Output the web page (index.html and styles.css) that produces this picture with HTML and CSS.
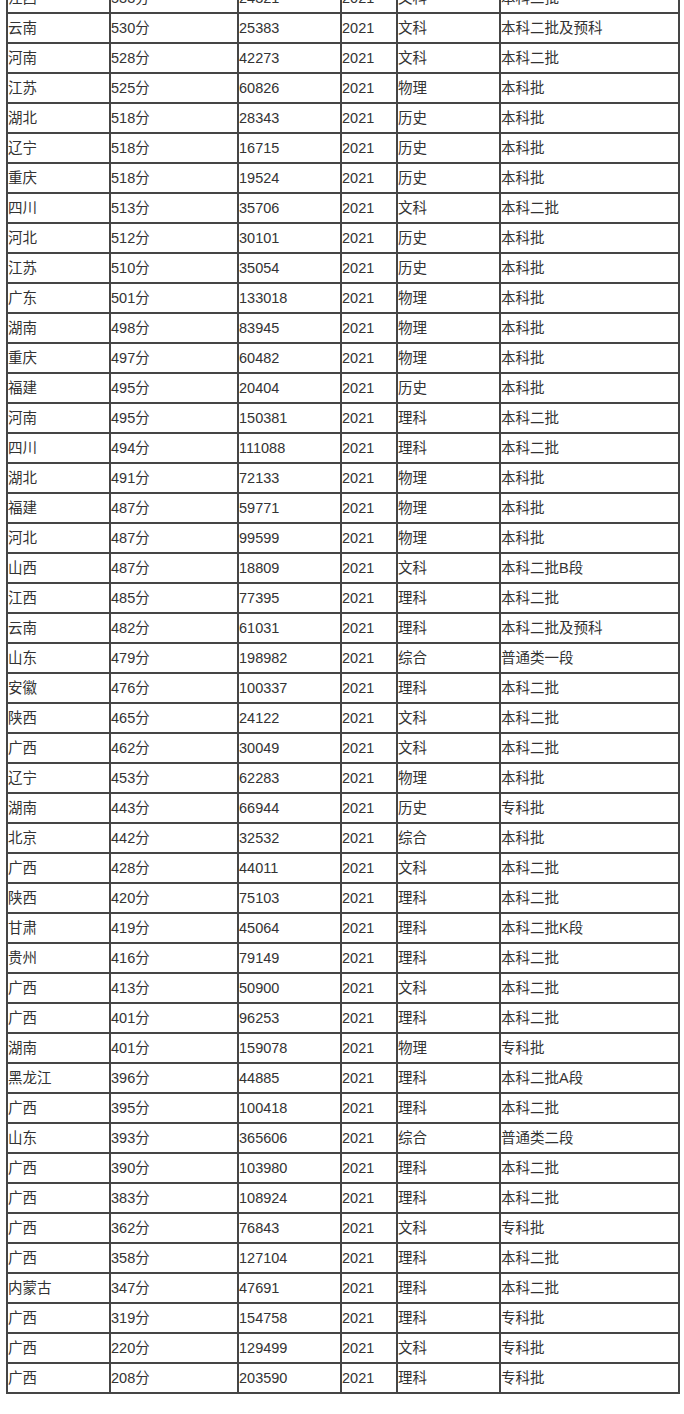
FILE: index.html
```html
<!DOCTYPE html>
<html lang="zh-CN">
<head>
<meta charset="utf-8">
<title>分数线</title>
<link rel="stylesheet" href="styles.css">
</head>
<body>
<table class="score-table">
<colgroup>
<col class="c1"><col class="c2"><col class="c3"><col class="c4"><col class="c5"><col class="c6">
</colgroup>
<tbody>
<tr><td>江西</td><td>533分</td><td>24321</td><td>2021</td><td>文科</td><td>本科二批</td></tr>
<tr><td>云南</td><td>530分</td><td>25383</td><td>2021</td><td>文科</td><td>本科二批及预科</td></tr>
<tr><td>河南</td><td>528分</td><td>42273</td><td>2021</td><td>文科</td><td>本科二批</td></tr>
<tr><td>江苏</td><td>525分</td><td>60826</td><td>2021</td><td>物理</td><td>本科批</td></tr>
<tr><td>湖北</td><td>518分</td><td>28343</td><td>2021</td><td>历史</td><td>本科批</td></tr>
<tr><td>辽宁</td><td>518分</td><td>16715</td><td>2021</td><td>历史</td><td>本科批</td></tr>
<tr><td>重庆</td><td>518分</td><td>19524</td><td>2021</td><td>历史</td><td>本科批</td></tr>
<tr><td>四川</td><td>513分</td><td>35706</td><td>2021</td><td>文科</td><td>本科二批</td></tr>
<tr><td>河北</td><td>512分</td><td>30101</td><td>2021</td><td>历史</td><td>本科批</td></tr>
<tr><td>江苏</td><td>510分</td><td>35054</td><td>2021</td><td>历史</td><td>本科批</td></tr>
<tr><td>广东</td><td>501分</td><td>133018</td><td>2021</td><td>物理</td><td>本科批</td></tr>
<tr><td>湖南</td><td>498分</td><td>83945</td><td>2021</td><td>物理</td><td>本科批</td></tr>
<tr><td>重庆</td><td>497分</td><td>60482</td><td>2021</td><td>物理</td><td>本科批</td></tr>
<tr><td>福建</td><td>495分</td><td>20404</td><td>2021</td><td>历史</td><td>本科批</td></tr>
<tr><td>河南</td><td>495分</td><td>150381</td><td>2021</td><td>理科</td><td>本科二批</td></tr>
<tr><td>四川</td><td>494分</td><td>111088</td><td>2021</td><td>理科</td><td>本科二批</td></tr>
<tr><td>湖北</td><td>491分</td><td>72133</td><td>2021</td><td>物理</td><td>本科批</td></tr>
<tr><td>福建</td><td>487分</td><td>59771</td><td>2021</td><td>物理</td><td>本科批</td></tr>
<tr><td>河北</td><td>487分</td><td>99599</td><td>2021</td><td>物理</td><td>本科批</td></tr>
<tr><td>山西</td><td>487分</td><td>18809</td><td>2021</td><td>文科</td><td>本科二批B段</td></tr>
<tr><td>江西</td><td>485分</td><td>77395</td><td>2021</td><td>理科</td><td>本科二批</td></tr>
<tr><td>云南</td><td>482分</td><td>61031</td><td>2021</td><td>理科</td><td>本科二批及预科</td></tr>
<tr><td>山东</td><td>479分</td><td>198982</td><td>2021</td><td>综合</td><td>普通类一段</td></tr>
<tr><td>安徽</td><td>476分</td><td>100337</td><td>2021</td><td>理科</td><td>本科二批</td></tr>
<tr><td>陕西</td><td>465分</td><td>24122</td><td>2021</td><td>文科</td><td>本科二批</td></tr>
<tr><td>广西</td><td>462分</td><td>30049</td><td>2021</td><td>文科</td><td>本科二批</td></tr>
<tr><td>辽宁</td><td>453分</td><td>62283</td><td>2021</td><td>物理</td><td>本科批</td></tr>
<tr><td>湖南</td><td>443分</td><td>66944</td><td>2021</td><td>历史</td><td>专科批</td></tr>
<tr><td>北京</td><td>442分</td><td>32532</td><td>2021</td><td>综合</td><td>本科批</td></tr>
<tr><td>广西</td><td>428分</td><td>44011</td><td>2021</td><td>文科</td><td>本科二批</td></tr>
<tr><td>陕西</td><td>420分</td><td>75103</td><td>2021</td><td>理科</td><td>本科二批</td></tr>
<tr><td>甘肃</td><td>419分</td><td>45064</td><td>2021</td><td>理科</td><td>本科二批K段</td></tr>
<tr><td>贵州</td><td>416分</td><td>79149</td><td>2021</td><td>理科</td><td>本科二批</td></tr>
<tr><td>广西</td><td>413分</td><td>50900</td><td>2021</td><td>文科</td><td>本科二批</td></tr>
<tr><td>广西</td><td>401分</td><td>96253</td><td>2021</td><td>理科</td><td>本科二批</td></tr>
<tr><td>湖南</td><td>401分</td><td>159078</td><td>2021</td><td>物理</td><td>专科批</td></tr>
<tr><td>黑龙江</td><td>396分</td><td>44885</td><td>2021</td><td>理科</td><td>本科二批A段</td></tr>
<tr><td>广西</td><td>395分</td><td>100418</td><td>2021</td><td>理科</td><td>本科二批</td></tr>
<tr><td>山东</td><td>393分</td><td>365606</td><td>2021</td><td>综合</td><td>普通类二段</td></tr>
<tr><td>广西</td><td>390分</td><td>103980</td><td>2021</td><td>理科</td><td>本科二批</td></tr>
<tr><td>广西</td><td>383分</td><td>108924</td><td>2021</td><td>理科</td><td>本科二批</td></tr>
<tr><td>广西</td><td>362分</td><td>76843</td><td>2021</td><td>文科</td><td>专科批</td></tr>
<tr><td>广西</td><td>358分</td><td>127104</td><td>2021</td><td>理科</td><td>本科二批</td></tr>
<tr><td>内蒙古</td><td>347分</td><td>47691</td><td>2021</td><td>理科</td><td>本科二批</td></tr>
<tr><td>广西</td><td>319分</td><td>154758</td><td>2021</td><td>理科</td><td>专科批</td></tr>
<tr><td>广西</td><td>220分</td><td>129499</td><td>2021</td><td>文科</td><td>专科批</td></tr>
<tr><td>广西</td><td>208分</td><td>203590</td><td>2021</td><td>理科</td><td>专科批</td></tr>
</tbody>
</table>
</body>
</html>
```

FILE: styles.css
```css
html, body {
  margin: 0;
  padding: 0;
  background: #ffffff;
}

body {
  font-family: "Liberation Sans", "Noto Sans CJK SC", sans-serif;
  font-size: 14.5px;
  color: #333333;
}

.score-table {
  margin: -18px 0 0 6px;
  border-collapse: separate;
  border-spacing: 0;
  border-top: 2px solid #454545;
  border-left: 2px solid #454545;
  table-layout: fixed;
  width: 674px;
}

.c1 { width: 103px; }
.c2 { width: 128px; }
.c3 { width: 103px; }
.c4 { width: 56px; }
.c5 { width: 103px; }
.c6 { width: 179px; }

.score-table td {
  box-sizing: border-box;
  height: 30px;
  padding: 0;
  border-right: 2px solid #454545;
  border-bottom: 2px solid #454545;
  vertical-align: middle;
  white-space: nowrap;
  line-height: 16px;
  overflow: hidden;
}
```
